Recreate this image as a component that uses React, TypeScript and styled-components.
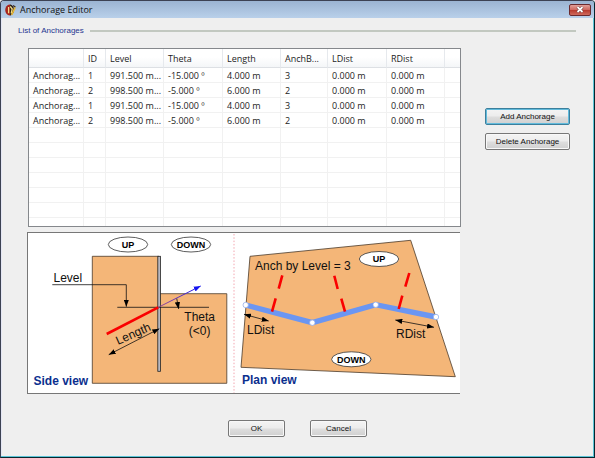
import React from 'react';
import styled, { createGlobalStyle } from 'styled-components';

const Global = createGlobalStyle`
  * { box-sizing: border-box; }
  body { margin: 0; background: #efefef; }
`;

const sans = `"Liberation Sans", Arial, sans-serif`;
const ui = `"Open Sans", "Segoe UI", sans-serif`;

const Window = styled.main`
  min-height: 100vh;
  display: flex;
  flex-direction: column;
  background: #efefef;
  border: 1px solid #3c4253;
  border-right-color: #06262e;
  border-bottom-color: #06262e;
  border-radius: 4px 4px 0 0;
  box-shadow: inset -1px -1px 0 #5cc4d6, inset 1px 0 0 #e4e6f4;
  font-family: ${sans};
`;

const TitleBar = styled.header`
  display: flex;
  align-items: center;
  gap: 4px;
  height: 17px;
  padding: 0 3px 0 4px;
  border-radius: 3px 3px 0 0;
  background: linear-gradient(#9bb4d2, #b9d0ea);
`;

const Title = styled.h1`
  flex: 1;
  margin: 0;
  font: 400 9px/16px ${ui};
  color: #111;
`;

const CloseButton = styled.button`
  display: flex;
  align-items: center;
  justify-content: center;
  width: 22px;
  height: 12px;
  padding: 0;
  border: 1px solid #6b2a2e;
  border-radius: 2px;
  background: linear-gradient(#e0a09a 0%, #d0685f 48%, #b83a2e 52%, #cf6a5c 100%);
`;

const Group = styled.section`
  padding: 7px 18px 0 17px;
`;

const GroupTitle = styled.h2`
  display: flex;
  align-items: center;
  gap: 6px;
  margin: 0;
  font: 400 8px/12px ${sans};
  color: #25358f;

  &::after {
    content: '';
    flex: 1;
    height: 2px;
    background: #c2c8c0;
  }
`;

const Content = styled.div`
  display: flex;
  gap: 24px;
  padding: 11px 6px 0 10px;
`;

const Main = styled.div`
  flex: 1;
  min-width: 0;
  display: flex;
  flex-direction: column;
  gap: 5px;
`;

const ListBox = styled.div`
  height: 179px;
  overflow: hidden;
  border: 1px solid #85888c;
  background: #fff;
`;

const Grid = styled.table`
  width: 100%;
  table-layout: fixed;
  border-collapse: separate;
  border-spacing: 0;
  font: 400 9px/12px ${ui};
  color: #1c1c1c;
`;

const Col = styled.col<{ $w?: number }>`
  width: ${({ $w }) => ($w ? `${$w}px` : 'auto')};
`;

const HeadCell = styled.th`
  height: 19px;
  padding: 2px 2px 0 4px;
  border-right: 1px solid #e6e9ed;
  border-bottom: 1px solid #dde0e4;
  background: linear-gradient(#fff 45%, #f4f6f8);
  font-weight: 400;
  text-align: left;
  white-space: nowrap;

  &:last-child { border-right: 0; }
`;

const Cell = styled.td`
  height: 15px;
  padding: 2px 0 0 4px;
  overflow: hidden;
  border-right: 1px solid #f1f1f1;
  border-bottom: 1px solid #f1f1f1;
  white-space: nowrap;

  &:last-child { border-right: 0; }
`;

const Side = styled.div`
  display: flex;
  flex-direction: column;
  gap: 8px;
  width: 85px;
  padding-top: 60px;
`;

const Button = styled.button<{ $focused?: boolean; $w?: number }>`
  width: ${({ $w }) => ($w ? `${$w}px` : '100%')};
  height: 17px;
  padding: 0;
  border: 1px solid ${({ $focused }) => ($focused ? '#3c7f9c' : '#777')};
  border-radius: 2px;
  background: linear-gradient(#f4f4f4 0%, #ececec 48%, #dedede 52%, #d0d0d0 100%);
  box-shadow: inset 0 0 0 1px ${({ $focused }) => ($focused ? '#62bbdc' : '#f8f8f8')};
  font: 400 8px/12px ${sans};
  color: #111;
`;

const Figure = styled.figure`
  margin: 0 1px 0 -1px;
  border: solid #777;
  border-width: 1px 0 1px 1px;
  background: #fff;
`;

const Drawing = styled.svg`
  display: block;
  width: 100%;
  font-family: ${sans};
  font-size: 12px;
`;

const Footer = styled.footer`
  display: flex;
  justify-content: center;
  gap: 25px;
  padding: 26px 0 20px;
`;

const columns = [
  { label: '', w: 55 },
  { label: 'ID', w: 22 },
  { label: 'Level', w: 58 },
  { label: 'Theta', w: 59 },
  { label: 'Length', w: 58 },
  { label: 'AnchB...', w: 47 },
  { label: 'LDist', w: 59 },
  { label: 'RDist', w: 58 },
  { label: '', w: undefined },
];

const rowA = ['Anchorag...', '1', '991.500 m...', '-15.000 º', '4.000 m', '3', '0.000 m', '0.000 m', ''];
const rowB = ['Anchorag...', '2', '998.500 m...', '-5.000 º', '6.000 m', '2', '0.000 m', '0.000 m', ''];
const blank = columns.map(() => '');
const rows = [rowA, rowB, rowA, rowB, ...Array.from({ length: 7 }, () => blank)];

function AppIcon() {
  return (
    <svg width="11" height="12" viewBox="0 0 11 12" aria-hidden="true">
      <ellipse cx="4.5" cy="6" rx="4.3" ry="5.4" fill="#a8241c" />
      <path d="M5 .6a4 5.4 0 0 1 0 10.8z" fill="#2c2418" />
      <path d="M3.6 3v6.2M5.2 2.4l2 2.6-1 4.4" stroke="#f4dc8a" strokeWidth="1.3" fill="none" />
      <path d="M10.2 3.4L6.6 11" stroke="#e4b83c" strokeWidth="1.7" />
      <path d="M8 1.4L10.4 3" stroke="#3a3020" strokeWidth="1.2" />
    </svg>
  );
}

function Badge({ x, y, label }: { x: number; y: number; label: string }) {
  return (
    <g>
      <ellipse cx={x} cy={y} rx="19.7" ry="7.5" fill="#fff" stroke="#333" strokeWidth=".8" />
      <text x={x} y={y + 3.2} textAnchor="middle" fontSize="9" fontWeight="700">{label}</text>
    </g>
  );
}

function AnchorageDiagram() {
  const both = { markerStart: 'url(#head)', markerEnd: 'url(#head)' };
  return (
    <Drawing viewBox="1 1 432 160" role="img" aria-label="Side view and plan view of anchorages">
      <defs>
        <marker id="head" viewBox="0 0 8 6" refX="8" refY="3" markerWidth="7" markerHeight="5.4" markerUnits="userSpaceOnUse" orient="auto-start-reverse">
          <path d="M0 0L8 3L0 6z" fill="#000" />
        </marker>
        <marker id="blueHead" viewBox="0 0 8 6" refX="8" refY="3" markerWidth="7" markerHeight="6" markerUnits="userSpaceOnUse" orient="auto">
          <path d="M0 0L8 3L0 6z" fill="#1414f0" />
        </marker>
        <linearGradient id="ray" gradientUnits="userSpaceOnUse" x1="131" y1="75" x2="174" y2="54">
          <stop offset="0" stopColor="#a04a90" />
          <stop offset="1" stopColor="#1414f0" />
        </linearGradient>
      </defs>

      <g stroke="#4a3a2a" strokeWidth=".8">
        <path d="M65.3 24.3H132V61.7H199.8V151.3H65.3z" fill="#f4b678" />
        <rect x="130.8" y="24.3" width="2.6" height="115" fill="#b8b8c0" stroke="#222" />
      </g>
      <Badge x={101} y={12.5} label="UP" />
      <Badge x={164} y={12.5} label="DOWN" />
      <g fill="none" stroke="#111" strokeWidth=".8">
        <path d="M25.3 52.7H99.3V74.7" markerEnd="url(#head)" />
        <path d="M90.3 75.3H182" />
        <path d="M149.7 66.3L151.7 77" markerEnd="url(#head)" />
        <path d="M81.7 122.7L132.3 96.7" {...both} />
      </g>
      <path d="M79.7 102L131.3 75.3" stroke="#fa0000" strokeWidth="2.6" />
      <path d="M131.3 75.3L173.7 54" stroke="url(#ray)" markerEnd="url(#blueHead)" />
      <g fill="#111">
        <text x="26.5" y="50">Level</text>
        <text x="172.7" y="89" textAnchor="middle">Theta</text>
        <text x="172.7" y="103" textAnchor="middle">(&lt;0)</text>
        <text transform="translate(91 113) rotate(-24)">Length</text>
      </g>
      <text x="6.5" y="152.5" fontWeight="700" fill="#0b2f8e">Side view</text>

      <path d="M207 2V161" stroke="#f3a6b0" strokeDasharray="1.5 1.8" />

      <path d="M223 24.3L383.7 8.3L428.3 144.7L214 135.3z" fill="#f4b678" stroke="#4a3a2a" strokeWidth=".8" />
      <Badge x={352} y={27} label="UP" />
      <Badge x={324.3} y={127.3} label="DOWN" />
      <path d="M218.7 73L285.3 90.7L348.7 72.7L409 85" fill="none" stroke="#6b96f2" strokeWidth="5.4" />
      <path
        d="M255.3 43.3L251.7 56.7M248.7 66.3L245 79.7M307.3 43.7L310.7 57M314.3 66.7L318 79.7M382.3 41L378.3 54.7M375.3 63.7L371.7 77"
        stroke="#fa0000"
        strokeWidth="2.6"
      />
      <g fill="#fff" stroke="#8aa6e6" strokeWidth=".7">
        <circle cx="218.7" cy="73" r="2.7" />
        <circle cx="285.3" cy="90.7" r="2.7" />
        <circle cx="348.7" cy="72.7" r="2.7" />
        <circle cx="409" cy="85" r="2.7" />
      </g>
      <g stroke="#111" strokeWidth=".8">
        <path d="M217 82.3L241.7 89" {...both} />
        <path d="M368.3 88L407 95.3" {...both} />
      </g>
      <g fill="#111">
        <text x="228" y="38">Anch by Level = 3</text>
        <text x="220" y="102">LDist</text>
        <text x="369" y="106">RDist</text>
      </g>
      <text x="215" y="152" fontWeight="700" fill="#0b2f8e">Plan view</text>
    </Drawing>
  );
}

export default function App() {
  return (
    <>
      <Global />
      <Window>
        <TitleBar>
          <AppIcon />
          <Title>Anchorage Editor</Title>
          <CloseButton type="button" aria-label="Close">
            <svg width="8" height="7" viewBox="0 0 8 7" aria-hidden="true">
              <path d="M1.5 1L6.5 6M6.5 1L1.5 6" stroke="#5a2a2a" strokeWidth="2.8" />
              <path d="M1.5 1L6.5 6M6.5 1L1.5 6" stroke="#fff" strokeWidth="1.8" />
            </svg>
          </CloseButton>
        </TitleBar>
        <Group>
          <GroupTitle>List of Anchorages</GroupTitle>
          <Content>
            <Main>
              <ListBox>
                <Grid>
                  <colgroup>
                    {columns.map((c, i) => <Col key={i} $w={c.w} />)}
                  </colgroup>
                  <thead>
                    <tr>
                      {columns.map((c, i) => <HeadCell key={i} scope="col">{c.label}</HeadCell>)}
                    </tr>
                  </thead>
                  <tbody>
                    {rows.map((r, i) => (
                      <tr key={i}>
                        {r.map((v, j) => <Cell key={j}>{v}</Cell>)}
                      </tr>
                    ))}
                  </tbody>
                </Grid>
              </ListBox>
              <Figure>
                <AnchorageDiagram />
              </Figure>
            </Main>
            <Side>
              <Button type="button" $focused>Add Anchorage</Button>
              <Button type="button">Delete Anchorage</Button>
            </Side>
          </Content>
        </Group>
        <Footer>
          <Button type="button" $w={57}>OK</Button>
          <Button type="button" $w={57}>Cancel</Button>
        </Footer>
      </Window>
    </>
  );
}
